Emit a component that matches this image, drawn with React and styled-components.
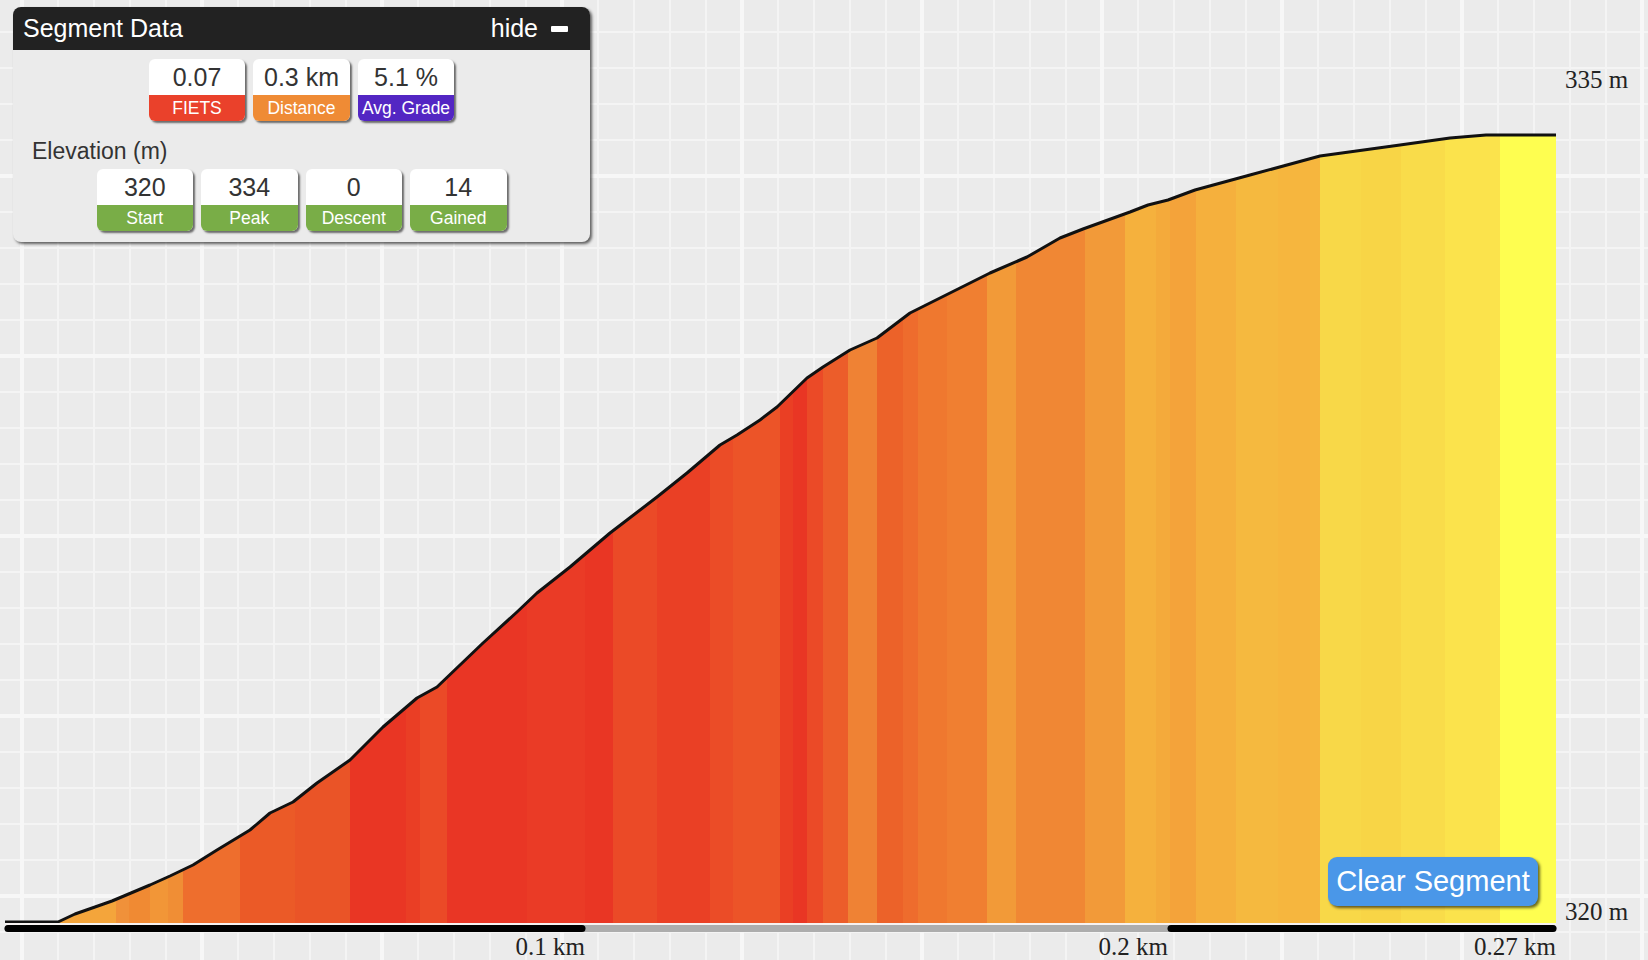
import React from 'react';
import styled, { createGlobalStyle } from 'styled-components';

const GlobalStyle = createGlobalStyle`
  html, body {
    margin: 0;
    padding: 0;
    overflow: hidden;
    font-family: "Liberation Sans", Arial, Helvetica, sans-serif;
  }
`;

// grid paper background: minor lines every 36px, major every 180px
const Page = styled.div`
  position: relative;
  width: 100vw;
  height: 100vh;
  background-color: #ebebeb;
  background-image:
    linear-gradient(to right, #f7f7f7 4px, transparent 4px),
    linear-gradient(to bottom, #f7f7f7 4px, transparent 4px),
    linear-gradient(to right, #f4f4f4 2px, transparent 2px),
    linear-gradient(to bottom, #f4f4f4 2px, transparent 2px);
  background-size: 180px 180px, 180px 180px, 36px 36px, 36px 36px;
  background-position: 20px 0, 0 174px, 21px 0, 0 31px;
`;

const ChartSvg = styled.svg`
  display: block;
  width: 1648px;
  height: 960px;
`;

const AxisText = styled.text`
  font-family: "Liberation Serif", "Times New Roman", serif;
  font-size: 25px;
  fill: #222;
`;

const Panel = styled.div`
  position: absolute;
  left: 13px;
  top: 7px;
  width: 577px;
  background: #ebebeb;
  border-radius: 8px;
  box-shadow: 2px 2px 3px rgba(0, 0, 0, 0.6);
  overflow: hidden;
`;

const PanelHeader = styled.div`
  height: 43px;
  background: #222;
  color: #fff;
  display: flex;
  align-items: center;
  justify-content: space-between;
  padding: 0 22px 0 10px;
  font-size: 25px;
`;

const HideToggle = styled.span`
  display: flex;
  align-items: center;
  gap: 13px;
`;

const MinusIcon = styled.span`
  display: inline-block;
  width: 17px;
  height: 6px;
  border-radius: 1px;
  background: #fff;
`;

const PanelBody = styled.div`
  padding: 9px 0 11px;
`;

const StatRow = styled.div`
  display: flex;
  justify-content: center;
  gap: 8px;
`;

const StatBox = styled.div`
  width: 96.5px;
  border-radius: 6px;
  overflow: hidden;
  background: #fff;
  box-shadow: 2px 2px 2px rgba(0, 0, 0, 0.55);
  text-align: center;
`;

const StatValue = styled.div`
  height: 36px;
  line-height: 36px;
  font-size: 25px;
  color: #333;
`;

const StatLabel = styled.div`
  height: 26px;
  line-height: 26px;
  font-size: 17.5px;
  color: #fff;
  white-space: nowrap;
  background: ${(p) => p.$color};
`;

const SectionLabel = styled.div`
  margin: 16px 0 4px 19px;
  font-size: 23px;
  line-height: 28px;
  color: #333;
`;

const ClearButton = styled.button`
  position: absolute;
  right: 110px;
  bottom: 54px;
  width: 210px;
  height: 49px;
  border: none;
  border-radius: 9px;
  background: #4a97e8;
  color: #fff;
  font-family: "Liberation Sans", Arial, sans-serif;
  font-size: 29px;
  padding: 0;
  box-shadow: 2px 2px 3px rgba(0, 0, 0, 0.6);
`;

const PROFILE = [
  [5, 922], [58, 922], [75, 914], [95, 907], [112, 901], [131, 893], [150, 885],
  [170, 876], [193, 865], [217, 850], [250, 830], [270, 813], [293, 802], [317, 783],
  [350, 760], [383, 727], [417, 698], [437, 687], [460, 665], [483, 643], [517, 612],
  [537, 593], [570, 567], [610, 533], [627, 520], [657, 497], [687, 473], [720, 445],
  [737, 435], [760, 420], [777, 407], [807, 378], [823, 367], [850, 350], [877, 338],
  [910, 313], [920, 308], [960, 288], [990, 273], [1027, 257], [1060, 238], [1083, 229],
  [1130, 212], [1148, 205], [1168, 200], [1195, 190], [1250, 175], [1320, 156],
  [1400, 145], [1450, 138], [1486, 135], [1556, 135],
];

// grade colour bands along the distance axis
const BANDS = [
  [5, 116, '#f4a53b'], [116, 129, '#f0913a'], [129, 150, '#f08a33'],
  [150, 168, '#f29637'], [168, 183, '#f08e35'], [183, 240, '#ee6e2d'],
  [240, 295, '#eb5a27'], [295, 350, '#ea5427'], [350, 406, '#e93624'],
  [406, 420, '#ea3e25'], [420, 447, '#eb4a27'], [447, 527, '#e93625'],
  [527, 585, '#ea3b26'], [585, 613, '#e93624'], [613, 657, '#eb4a27'],
  [657, 710, '#ea4025'], [710, 733, '#eb4c27'], [733, 780, '#ec5428'],
  [780, 793, '#ea3f24'], [793, 807, '#e93624'], [807, 823, '#eb4a27'],
  [823, 848, '#ec5d2a'], [848, 877, '#ef8234'], [877, 903, '#ec6229'],
  [903, 918, '#ee6c2d'], [918, 947, '#ef782f'], [947, 987, '#f07f31'],
  [987, 1016, '#f29a38'], [1016, 1085, '#f08734'], [1085, 1125, '#f29a39'],
  [1125, 1156, '#f5b13d'], [1156, 1170, '#f4aa3b'], [1170, 1196, '#f4a33a'],
  [1196, 1236, '#f5b03d'], [1236, 1278, '#f5b93f'], [1278, 1320, '#f6b63e'],
  [1320, 1361, '#f8d848'], [1361, 1401, '#f8d546'], [1401, 1445, '#f9dc4a'],
  [1445, 1500, '#fbe34c'], [1500, 1557, '#fefe50'],
];

const topStats = [
  { value: '0.07', label: 'FIETS', color: '#ea412b' },
  { value: '0.3 km', label: 'Distance', color: '#ef8b35' },
  { value: '5.1 %', label: 'Avg. Grade', color: '#5326c3' },
];

const elevationStats = [
  { value: '320', label: 'Start' },
  { value: '334', label: 'Peak' },
  { value: '0', label: 'Descent' },
  { value: '14', label: 'Gained' },
];

const ElevationChart = () => {
  const line = PROFILE.map((p) => p.join(',')).join(' ');
  const area = `${line} 1556,923 5,923`;
  return (
    <ChartSvg viewBox="0 0 1648 960">
      <defs>
        <clipPath id="profile-clip">
          <polygon points={area} />
        </clipPath>
      </defs>
      <g clipPath="url(#profile-clip)">
        {BANDS.map(([x0, x1, c]) => (
          <rect key={x0} x={x0} y={100} width={x1 - x0 + 0.5} height={830} fill={c} />
        ))}
      </g>
      <polyline points={line} fill="none" stroke="#111" strokeWidth="3" strokeLinejoin="round" />
      <line x1="5" y1="924" x2="1556" y2="924" stroke="#f6f2f1" strokeWidth="2" />
      <line x1="8" y1="928.5" x2="1553" y2="928.5" stroke="#adadad" strokeWidth="7" strokeLinecap="round" />
      <line x1="8" y1="928.5" x2="582" y2="928.5" stroke="#000" strokeWidth="7" strokeLinecap="round" />
      <line x1="1171" y1="928.5" x2="1553" y2="928.5" stroke="#000" strokeWidth="7" strokeLinecap="round" />
      <AxisText x="1565" y="88">335 m</AxisText>
      <AxisText x="1565" y="920">320 m</AxisText>
      <AxisText x="585" y="955" textAnchor="end">0.1 km</AxisText>
      <AxisText x="1168" y="955" textAnchor="end">0.2 km</AxisText>
      <AxisText x="1556" y="955" textAnchor="end">0.27 km</AxisText>
    </ChartSvg>
  );
};

const App = () => {
  return (
    <Page>
      <GlobalStyle />
      <ElevationChart />

      <Panel>
        <PanelHeader>
          <span>Segment Data</span>
          <HideToggle>
            hide <MinusIcon />
          </HideToggle>
        </PanelHeader>
        <PanelBody>
          <StatRow>
            {topStats.map((s) => (
              <StatBox key={s.label}>
                <StatValue>{s.value}</StatValue>
                <StatLabel $color={s.color}>{s.label}</StatLabel>
              </StatBox>
            ))}
          </StatRow>
          <SectionLabel>Elevation (m)</SectionLabel>
          <StatRow>
            {elevationStats.map((s) => (
              <StatBox key={s.label}>
                <StatValue>{s.value}</StatValue>
                <StatLabel $color="#79ad47">{s.label}</StatLabel>
              </StatBox>
            ))}
          </StatRow>
        </PanelBody>
      </Panel>

      <ClearButton>Clear Segment</ClearButton>
    </Page>
  );
};

export default App;
